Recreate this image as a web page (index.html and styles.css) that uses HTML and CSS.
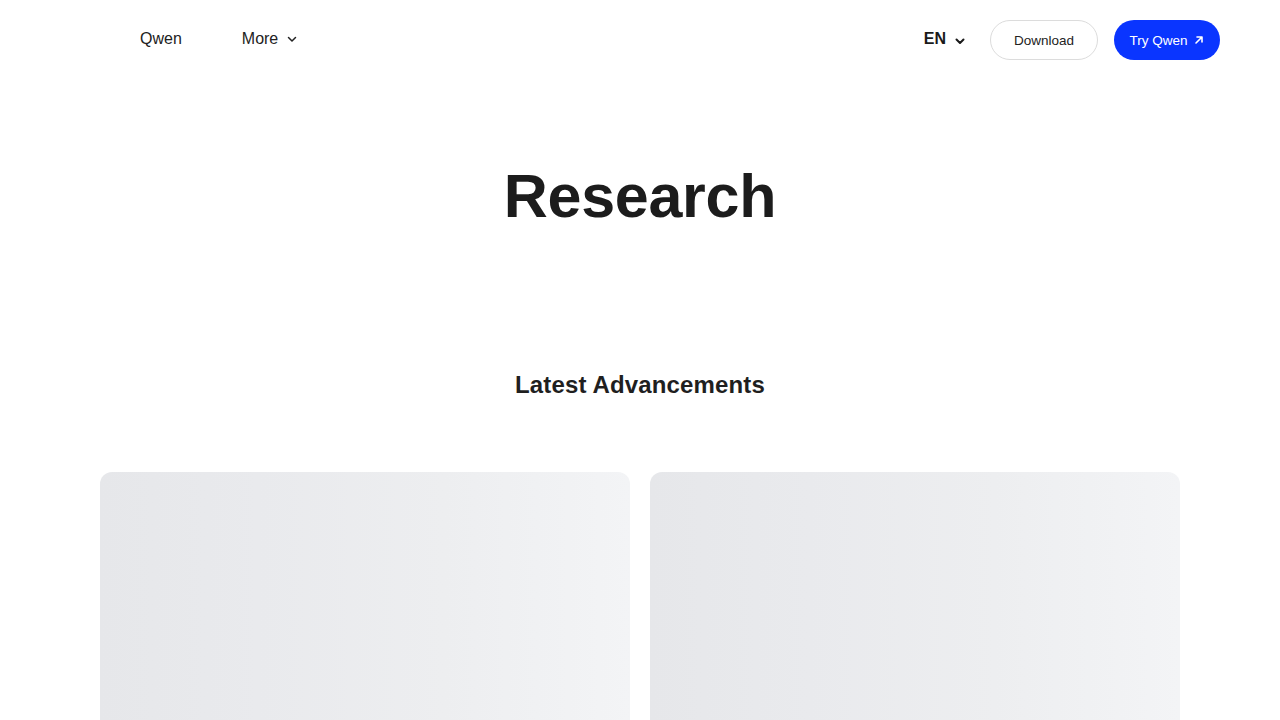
FILE: index.html
```html
<!DOCTYPE html>
<html lang="en">
<head>
<meta charset="utf-8">
<title>Research - Qwen</title>
<link rel="stylesheet" href="styles.css">
</head>
<body>
<header class="header">
  <nav class="nav-left">
    <a class="nav-link" href="#">Qwen</a>
    <a class="nav-link nav-more" href="#">More
      <svg class="chev" width="12" height="12" viewBox="0 0 12 12"><path d="M2.5 4.5 L6 8 L9.5 4.5" fill="none" stroke="#222" stroke-width="1.5" stroke-linecap="round" stroke-linejoin="round"/></svg>
    </a>
  </nav>
  <div class="nav-right">
    <button class="lang">EN
      <svg class="chev" width="12" height="12" viewBox="0 0 12 12"><path d="M2.5 4.5 L6 8 L9.5 4.5" fill="none" stroke="#1a1a1a" stroke-width="2" stroke-linecap="round" stroke-linejoin="round"/></svg>
    </button>
    <a class="btn btn-outline" href="#">Download</a>
    <a class="btn btn-primary" href="#">Try Qwen
      <svg width="12" height="12" viewBox="0 0 12 12"><path d="M3 9 L9 3 M4 3 H9 V8" fill="none" stroke="#fff" stroke-width="1.6" stroke-linecap="round" stroke-linejoin="round"/></svg>
    </a>
  </div>
</header>
<main>
  <h1 class="title">Research</h1>
  <h2 class="subtitle">Latest Advancements</h2>
  <section class="cards">
    <div class="card"></div>
    <div class="card"></div>
  </section>
</main>
</body>
</html>
```
FILE: styles.css
```css
* { box-sizing: border-box; }
html, body { margin: 0; padding: 0; background: #fff; }
body {
  font-family: "Liberation Sans", Arial, Helvetica, sans-serif;
  color: #1f1f1f;
  height: 720px;
  overflow: hidden;
}
a { text-decoration: none; color: inherit; }
.header {
  height: 78px;
  display: flex;
  align-items: center;
  justify-content: space-between;
  padding: 2px 60px 0 140px;
}
.nav-left { display: flex; align-items: center; gap: 60px; }
.nav-link {
  font-size: 16px;
  color: #222;
  display: flex;
  align-items: center;
  gap: 8px;
  margin-top: -2px;
}
.chev { display: block; }
.nav-right { display: flex; align-items: center; gap: 16px; }
.lang {
  border: none;
  background: none;
  font-family: inherit;
  font-weight: 700;
  font-size: 16px;
  color: #1a1a1a;
  display: flex;
  align-items: center;
  gap: 8px;
  padding: 0;
  margin-right: 8px;
  margin-top: -2px;
  cursor: pointer;
}
.lang .chev { margin-top: 3px; }
.btn {
  height: 40px;
  border-radius: 20px;
  display: flex;
  align-items: center;
  justify-content: center;
  font-size: 13.5px;
  gap: 5px;
}
.btn-outline {
  width: 108px;
  border: 1px solid #dcdcdc;
  color: #222;
}
.btn-primary {
  width: 106px;
  background: #0a35ff;
  color: #fff;
}
.title {
  margin: 86px 0 0;
  text-align: center;
  font-size: 61px;
  font-weight: 700;
  line-height: 64px;
  color: #1c1c1c;
  letter-spacing: -0.3px;
}
.subtitle {
  margin: 143px 0 0;
  text-align: center;
  font-size: 24px;
  font-weight: 700;
  line-height: 28px;
  color: #1f1f1f;
  letter-spacing: 0.15px;
}
.cards {
  margin: 73px 100px 0;
  display: grid;
  grid-template-columns: 1fr 1fr;
  gap: 20px;
}
.card {
  height: 400px;
  border-radius: 12px;
  background: linear-gradient(90deg, #e6e7ea 0%, #e9eaed 30%, #edeef0 65%, #f3f4f6 100%);
}
```
